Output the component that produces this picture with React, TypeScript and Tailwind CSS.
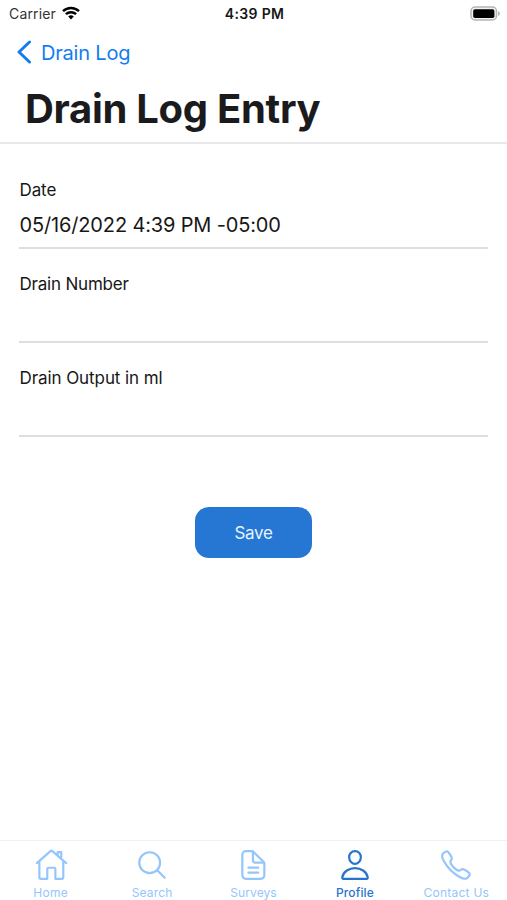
import type { ReactNode } from "react";

function Icon({ children }: { children: ReactNode }) {
  return (
    <svg viewBox="0 0 512 512" className="size-[34px] shrink-0" fill="none" stroke="currentColor" strokeWidth={33} strokeLinecap="round" strokeLinejoin="round">
      {children}
    </svg>
  );
}

function Tab({ label, active, spacing, children }: { label: string; active?: boolean; spacing: string; children: ReactNode }) {
  return (
    <button className={`flex h-[59px] flex-1 flex-col items-center justify-start pt-[6.5px] ${active ? "text-[#2774cc]" : "text-[#94c6fb]"}`}>
      <Icon>{children}</Icon>
      <span className={`mt-[3.5px] whitespace-nowrap pt-px text-[12px] leading-[14px] ${active ? "font-medium" : ""} ${spacing}`}>{label}</span>
    </button>
  );
}

function Field({ label, value, spacing }: { label: string; value?: string; spacing: string }) {
  return (
    <div className="h-[94px] border-b-2 border-[#dedede] pl-[0.5px] pt-[24px]">
      <div className={`text-[17px] leading-[22px] ${spacing}`}>{label}</div>
      <div className="mt-[10px] text-[20px] leading-[28px] tracking-[-0.15px]">{value}</div>
    </div>
  );
}

export default function App() {
  return (
    <div className="flex h-[900px] w-[507px] flex-col overflow-hidden bg-white font-['Inter',sans-serif] text-[#171717]">
      <header className="h-[144px] border-b-2 border-[#e8e8e8]">
        <div className="grid h-[26px] grid-cols-3 items-center pl-[9px] pr-[7px] text-[14px]">
          <div className="flex items-center gap-[6px] text-[#333]">
            <span className="tracking-[0.15px]">Carrier</span>
            <svg width="18" height="14" viewBox="0 0 18 14" fill="none" stroke="#000" strokeWidth="2.5">
              <path d="M1 5.2a11.6 11.6 0 0 1 16 0M3.9 8.2a7.4 7.4 0 0 1 10.2 0" />
              <path d="m9 13.5-2.8-3a4.1 4.1 0 0 1 5.6 0Z" fill="#000" stroke="none" />
            </svg>
          </div>
          <div className="text-center text-[14px] font-semibold tracking-[0.35px]">4:39 PM</div>
          <svg className="justify-self-end" width="30" height="15" viewBox="0 0 30 15">
            <rect x="1" y="1" width="25.5" height="13" rx="4" fill="#f1f1f1" stroke="#b5b5b5" strokeWidth="1.5" />
            <rect x="3.2" y="3.2" width="21.2" height="8.8" rx="1.8" fill="#000" />
            <path d="M28 5v5q2-1 2-2.5T28 5Z" fill="#b5b5b5" />
          </svg>
        </div>
        <a className="mt-[2px] flex h-12 items-center pl-[17px] text-[#147cf0]">
          <svg width="14" height="24" viewBox="0 0 14 24" fill="none" stroke="currentColor" strokeWidth="3" strokeLinecap="round" strokeLinejoin="round">
            <path d="M12.5 2 2 12l10.500 10" />
          </svg>
          <span className="ml-[10px] pt-px text-[20px] tracking-[-0.2px]">Drain Log</span>
        </a>
        <h1 className="mt-[8px] pl-[25px] text-[40px] font-bold leading-[50px] tracking-[-0.3px] text-[#1b1b1d]">Drain Log Entry</h1>
      </header>
      <main className="flex flex-1 flex-col px-[19px] pt-[11px]">
        <Field label="Date" value="05/16/2022 4:39 PM -05:00" spacing="tracking-[-0.1px]" />
        <Field label="Drain Number" spacing="tracking-[-0.2px]" />
        <Field label="Drain Output in ml" spacing="tracking-[-0.08px]" />
        <button className="mt-[70px] h-[51px] w-[117px] self-center rounded-[14px] bg-[#2677d3] pt-0.5 text-[17px] tracking-[-0.3px] text-[#e5f3ff]">Save</button>
      </main>
      <nav className="flex h-[60px] border-t border-[#efefef]">
        <Tab label="Home" spacing="tracking-[0.3px]">
          <g transform="translate(-7 0)">
            <path d="M88 205v236q0 23 23 23h96V315q0-18 18-18h86q18 0 18 18v149h96q23 0 23-23V205" />
            <path d="M50 228 255 47q14-12 28 0l209 181M364 108V62h54v106" />
          </g>
        </Tab>
        <Tab label="Search" spacing="tracking-[0.15px]">
          <path d="M221.090 64a157.090 157.090 0 1 0 157.090 157.090A157.100 157.100 0 0 0 221.090 64Z" />
          <path d="M338.290 338.290 448 448" />
        </Tab>
        <Tab label="Surveys" spacing="tracking-[0.1px]">
          <g transform="translate(-12 0)">
            <path d="M424 232v180a52 52 0 0 1-52 52H144a52 52 0 0 1-52-52V100a52 52 0 0 1 52-52h92a36 36 0 0 1 25 11l150 148a36 36 0 0 1 13 25Z" />
            <path d="M252 56v128a36 36 0 0 0 36 36h128M184 296h148M184 372h148" />
          </g>
        </Tab>
        <Tab label="Profile" active spacing="tracking-[0.15px]">
          <path d="M344 144c-3.920 52.870-44 96-88 96s-84.150-43.120-88-96c-4-55 35-96 88-96s92 42 88 96Z" />
          <path d="M256 304c-87 0-175.300 48-191.640 138.600C62.390 453.520 68.570 464 80 464h352c11.440 0 17.620-10.480 15.650-21.400C431.300 352 343 304 256 304Z" />
        </Tab>
        <Tab label="Contact Us" spacing="tracking-[0.25px]">
          <path d="M451 374c-15.880-16-54.340-39.350-73-48.760-24.300-12.240-26.300-13.240-45.400.950-12.740 9.470-21.210 17.930-36.120 14.750s-47.310-21.110-75.680-49.390-47.340-61.620-50.530-76.480 5.410-23.230 14.790-36c13.220-18 12.220-21 .920-45.300-8.810-18.900-32.840-57-48.900-72.800C119.900 44 119.900 47 108.830 51.600A160.150 160.150 0 0 0 83 65.370C67 76 58.120 84.830 51.910 98.100s-9 44.380 23.070 102.640 54.570 88.050 101.140 134.490S258.500 406.640 310.850 436c64.760 36.270 89.600 29.200 102.910 23s22.180-15 32.830-31a159.090 159.090 0 0 0 13.800-25.800C465 391.170 468 391.170 451 374Z" />
        </Tab>
      </nav>
    </div>
  );
}
